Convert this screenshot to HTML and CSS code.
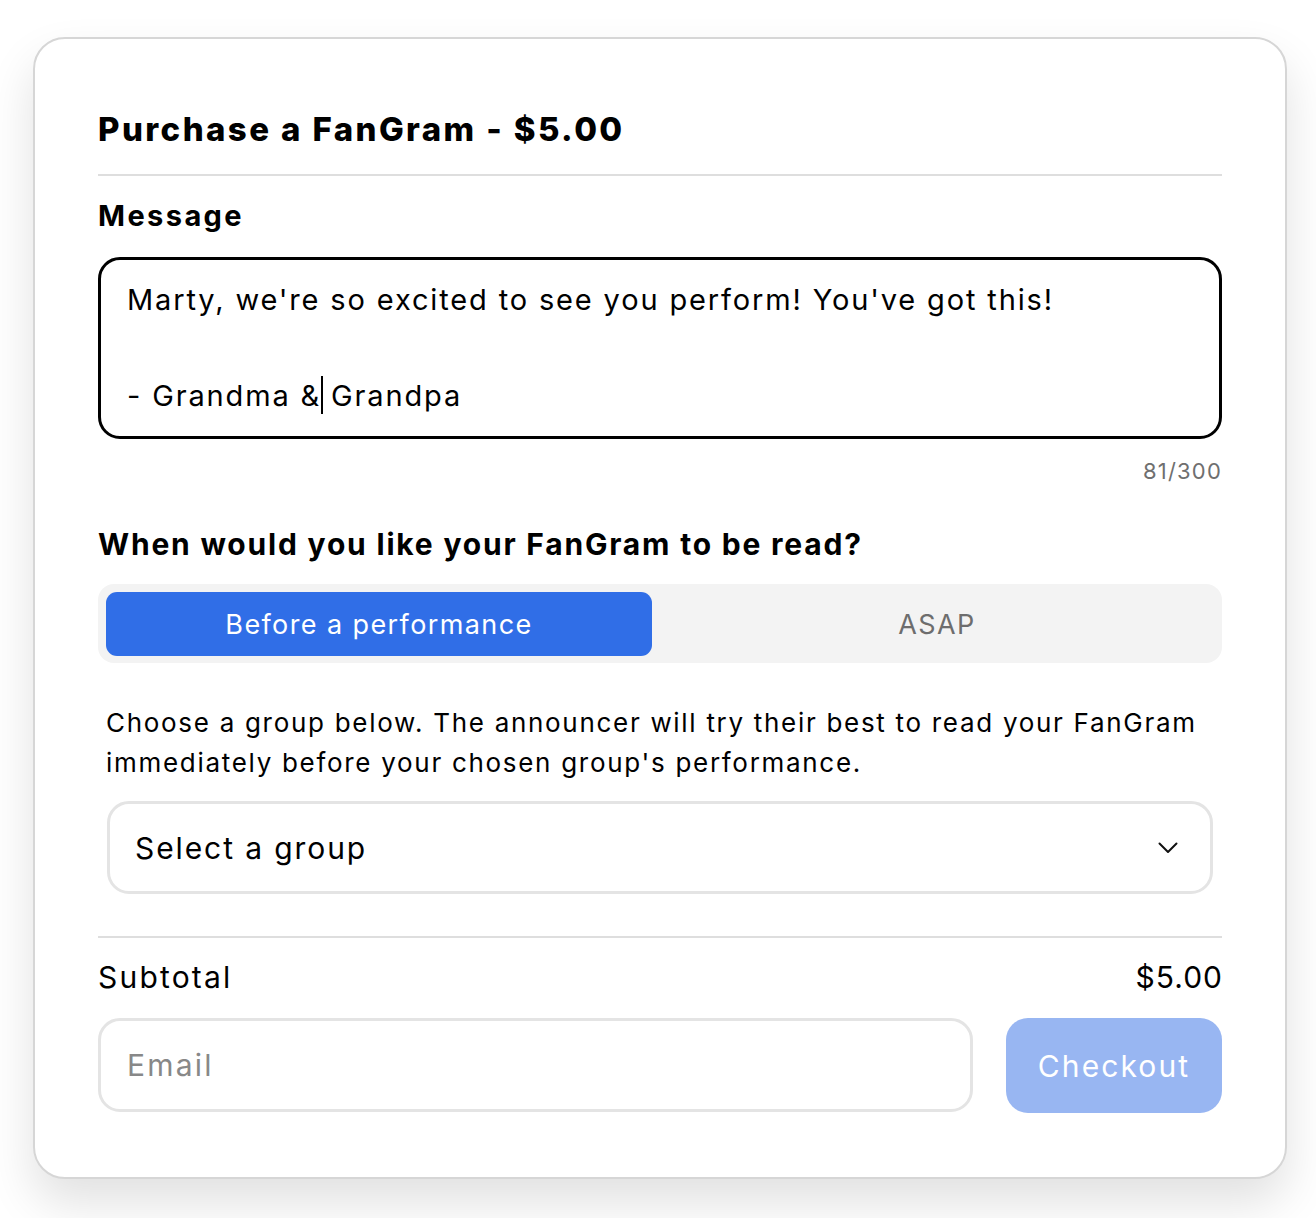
FILE: index.html
```html
<!DOCTYPE html>
<html lang="en">
<head>
<meta charset="utf-8">
<title>Purchase a FanGram</title>
<link rel="stylesheet" href="styles.css">
</head>
<body>
<div class="card">
  <h1 class="title">Purchase a FanGram - $5.00</h1>
  <div class="label">Message</div>
  <div class="message">Marty, we're so excited to see you perform! You've got this!

- Grandma &amp; Grandpa</div>
  <div class="counter">81/300</div>
  <h2 class="question">When would you like your FanGram to be read?</h2>
  <div class="segmented">
    <button class="seg active">Before a performance</button>
    <button class="seg">ASAP</button>
  </div>
  <p class="hint">Choose a group below. The announcer will try their best to read your FanGram immediately before your chosen group's performance.</p>
  <div class="select">
    <span class="select-text">Select a group</span>
    <svg class="chev" width="20" height="12" viewBox="0 0 20 12"><path d="M1.5 1.5 L10 10 L18.5 1.5" fill="none" stroke="#111" stroke-width="2" stroke-linecap="round" stroke-linejoin="round"/></svg>
  </div>
  <div class="subtotal">
    <span class="sub-label">Subtotal</span>
    <span class="sub-value">$5.00</span>
  </div>
  <div class="checkout-row">
    <input class="email" type="text" placeholder="Email">
    <button class="checkout">Checkout</button>
  </div>
</div>
</body>
</html>
```

FILE: styles.css
```css
* { box-sizing: border-box; }
html, body { margin: 0; padding: 0; background: #fff; }
body {
  padding: 37px 0 39px 33px;
  font-family: Inter, "Noto Sans", sans-serif;
  color: #000;
}
.card {
  width: 1254px;
  height: 1142px;
  border: 2px solid #d6d6d6;
  border-radius: 32px;
  background: #fff;
  padding: 64px 63px 65px 63px;
  box-shadow: 0 24px 48px rgba(0, 0, 0, 0.12);
  display: flex;
  flex-direction: column;
}
.title {
  margin: 0;
  font-size: 33px;
  font-weight: 800;
  line-height: 52px;
  letter-spacing: 2.4px;
  padding-bottom: 19px;
  border-bottom: 2px solid #dedede;
}
.label {
  margin-top: 20px;
  font-size: 29px;
  font-weight: 700;
  line-height: 40px;
  letter-spacing: 2.4px;
}
.message {
  position: relative;
  margin-top: 21px;
  height: 182px;
  border: 3px solid #000;
  border-radius: 22px;
  padding: 16px 26px;
  font-size: 29px;
  line-height: 48px;
  letter-spacing: 1.85px;
  white-space: pre-wrap;
}
.message::after {
  content: "";
  position: absolute;
  left: 220px;
  top: 116px;
  width: 2px;
  height: 38px;
  background: #000;
}
.counter {
  margin-top: 18px;
  line-height: 28px;
  font-size: 22px;
  letter-spacing: 1.2px;
  color: #6f6f6f;
  text-align: right;
}
.question {
  margin: 39px 0 0;
  font-size: 30px;
  font-weight: 700;
  line-height: 40px;
  letter-spacing: 1.8px;
}
.segmented {
  margin-top: 20px;
  height: 79px;
  background: #f3f3f3;
  border-radius: 16px;
  padding: 8px 8px 7px;
  display: flex;
  gap: 8px;
}
.seg {
  flex: 1;
  border: 0;
  background: transparent;
  border-radius: 11px;
  font-family: inherit;
  font-size: 27px;
  letter-spacing: 1.4px;
  color: #6d6d6d;
  padding: 0;
  cursor: pointer;
}
.seg.active {
  flex: 0 0 546px;
  background: #306ee7;
  color: #fff;
}
.hint {
  margin: 40px 0 0;
  padding-left: 8px;
  font-size: 26px;
  line-height: 40px;
  letter-spacing: 1.7px;
}
.select {
  margin: 18px 9px 0;
  height: 93px;
  border: 3px solid #e4e4e4;
  border-radius: 22px;
  padding: 0 32px 0 25px;
  display: flex;
  align-items: center;
  justify-content: space-between;
  font-size: 30px;
}
.select-text { letter-spacing: 1.9px; }
.chev { display: block; }
.subtotal {
  margin-top: 42px;
  border-top: 2px solid #dedede;
  padding-top: 19px;
  display: flex;
  justify-content: space-between;
  font-size: 30px;
  line-height: 40px;
}
.sub-label { letter-spacing: 2.2px; }
.sub-value { letter-spacing: 1px; margin-right: -1px; }
.checkout-row {
  margin-top: 21px;
  display: flex;
  gap: 33px;
  height: 94px;
}
.email {
  flex: 1;
  height: 94px;
  border: 3px solid #e4e4e4;
  border-radius: 22px;
  padding: 0 26px;
  font-family: inherit;
  font-size: 30px;
  letter-spacing: 2.2px;
  color: #000;
  outline: none;
  background: #fff;
}
.email::placeholder { color: #888; }
.checkout {
  flex: 0 0 216px;
  height: 95px;
  border: 0;
  border-radius: 22px;
  background: #98b6f2;
  color: #fff;
  font-family: inherit;
  font-size: 30px;
  letter-spacing: 2.1px;
  padding: 0;
}
```
